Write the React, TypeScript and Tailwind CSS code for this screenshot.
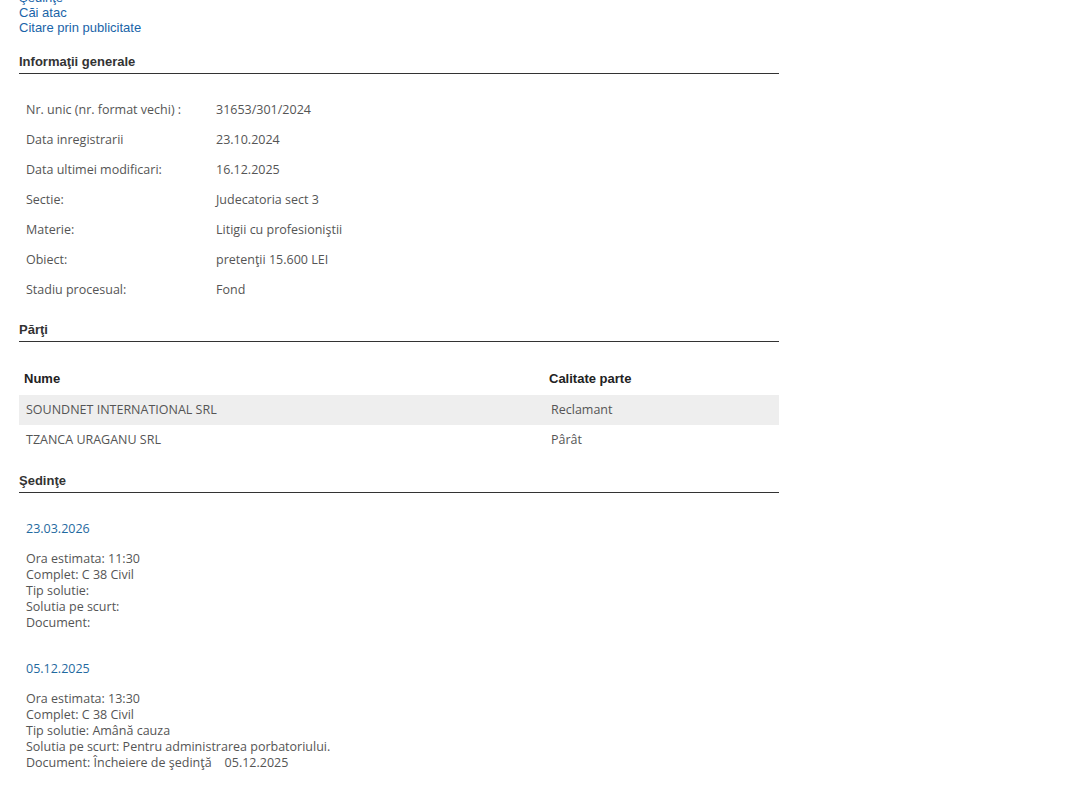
import React from "react";

const body = { fontFamily: '"Open Sans", "DejaVu Sans", sans-serif' };
const arial = { fontFamily: '"Liberation Sans", Arial, sans-serif' };

function Heading({ children }: { children: React.ReactNode }) {
  return (
    <div
      className="w-[760px] border-b border-[#333] pb-[4px] text-[13px] font-bold leading-[15px] text-[#333]"
      style={arial}
    >
      {children}
    </div>
  );
}

const info: [string, string][] = [
  ["Nr. unic (nr. format vechi) :", "31653/301/2024"],
  ["Data inregistrarii", "23.10.2024"],
  ["Data ultimei modificari:", "16.12.2025"],
  ["Sectie:", "Judecatoria sect 3"],
  ["Materie:", "Litigii cu profesioniştii"],
  ["Obiect:", "pretenţii 15.600 LEI"],
  ["Stadiu procesual:", "Fond"],
];

const sedinte = [
  {
    date: "23.03.2026",
    lines: [
      "Ora estimata: 11:30",
      "Complet: C 38 Civil",
      "Tip solutie:",
      "Solutia pe scurt:",
      "Document:",
    ],
  },
  {
    date: "05.12.2025",
    lines: [
      "Ora estimata: 13:30",
      "Complet: C 38 Civil",
      "Tip solutie: Amână cauza",
      "Solutia pe scurt: Pentru administrarea porbatoriului.",
      "Document: Încheiere de şedinţă\u00a0\u00a0\u00a0\u00a005.12.2025",
    ],
  },
];

export default function App() {
  return (
    <div className="min-h-[790px] w-[1078px] overflow-hidden bg-white pl-[19px]">
      <div className="-mt-[10px] flex flex-col text-[13px] leading-[15px] text-[#1a64a8]" style={arial}>
        <a>Şedinţe</a>
        <a>Căi atac</a>
        <a>Citare prin publicitate</a>
      </div>

      <div className="mt-[19px]">
        <Heading>Informaţii generale</Heading>
      </div>
      <div className="mt-[21px] flex flex-col pl-[7px] text-[12.5px] text-[#555]" style={body}>
        {info.map(([k, v]) => (
          <div key={k} className="flex h-[30px] items-center">
            <div className="w-[190px]">{k}</div>
            <div>{v}</div>
          </div>
        ))}
      </div>

      <div className="mt-[17px]">
        <Heading>Părţi</Heading>
      </div>
      <div className="mt-[20px] w-[760px]">
        <div className="flex h-[33px] items-center text-[13px] font-bold text-[#222]" style={arial}>
          <div className="w-[530px] pl-[5px]">Nume</div>
          <div>Calitate parte</div>
        </div>
        <div className="flex h-[30px] items-center bg-[#eeeeee] text-[12.5px] text-[#555]" style={body}>
          <div className="w-[532px] pl-[7px]">SOUNDNET INTERNATIONAL SRL</div>
          <div>Reclamant</div>
        </div>
        <div className="flex h-[30px] items-center text-[12.5px] text-[#555]" style={body}>
          <div className="w-[532px] pl-[7px]">TZANCA URAGANU SRL</div>
          <div>Pârât</div>
        </div>
      </div>

      <div className="mt-[18px]">
        <Heading>Şedinţe</Heading>
      </div>
      <div className="mt-[28px] flex flex-col gap-[30px] pl-[7px] text-[12.5px] leading-[16px] text-[#555]" style={body}>
        {sedinte.map((s) => (
          <div key={s.date}>
            <div className="text-[#1f6aa0]">{s.date}</div>
            <div className="mt-[14px] flex flex-col">
              {s.lines.map((l) => (
                <div key={l} className="whitespace-pre">{l}</div>
              ))}
            </div>
          </div>
        ))}
      </div>
    </div>
  );
}
